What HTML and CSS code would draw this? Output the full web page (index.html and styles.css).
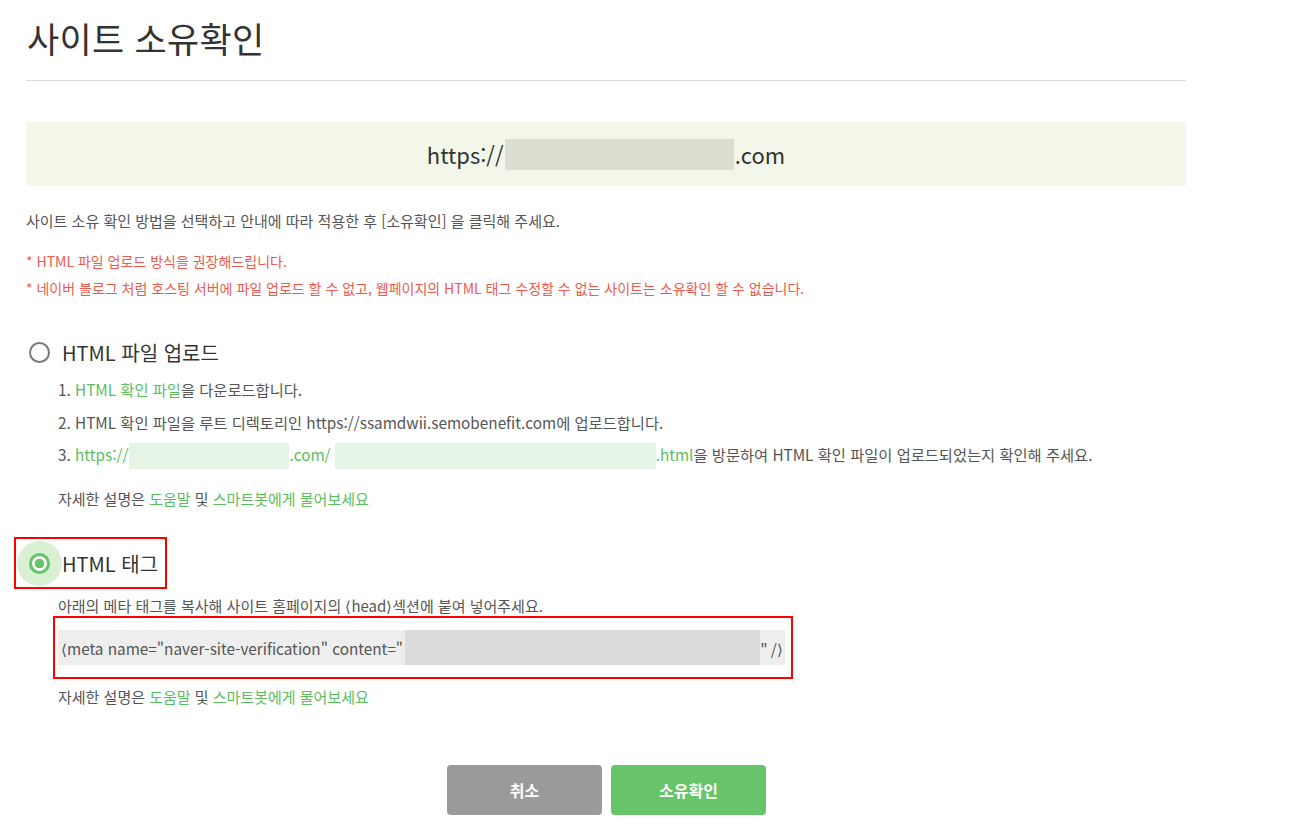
FILE: index.html
```html
<!DOCTYPE html>
<html lang="ko">
<head>
<meta charset="utf-8">
<title>사이트 소유확인</title>
<link rel="stylesheet" href="styles.css">
</head>
<body>
<div class="page">
  <h1 class="title">사이트 소유확인</h1>
  <div class="site-box">
    <span>https://</span><span class="blur blur-site"></span><span>.com</span>
  </div>
  <p class="desc">사이트 소유 확인 방법을 선택하고 안내에 따라 적용한 후 [소유확인] 을 클릭해 주세요.</p>
  <p class="warn">* HTML 파일 업로드 방식을 권장해드립니다.</p>
  <p class="warn warn2">* 네이버 블로그 처럼 호스팅 서버에 파일 업로드 할 수 없고, 웹페이지의 HTML 태그 수정할 수 없는 사이트는 소유확인 할 수 없습니다.</p>

  <div class="option">
    <div class="opt-head">
      <span class="radio"></span>
      <span class="opt-label">HTML 파일 업로드</span>
    </div>
    <ol class="steps">
      <li>1. <a class="g">HTML 확인 파일</a>을 다운로드합니다.</li>
      <li>2. HTML 확인 파일을 루트 디렉토리인 https://ssamdwii.semobenefit.com에 업로드합니다.</li>
      <li>3. <a class="g">https://<span class="blur blur-a"></span>.com/<span class="blur blur-b"></span>.html</a>을 방문하여 HTML 확인 파일이 업로드되었는지 확인해 주세요.</li>
    </ol>
    <p class="help">자세한 설명은 <a class="g">도움말</a> 및 <a class="g">스마트봇에게 물어보세요</a></p>
  </div>

  <div class="option option-tag">
    <div class="opt-head selected-box">
      <span class="radio-on"><span class="ring"></span></span>
      <span class="opt-label">HTML 태그</span>
    </div>
    <p class="tag-desc">아래의 메타 태그를 복사해 사이트 홈페이지의 &lang;head&rang;섹션에 붙여 넣어주세요.</p>
    <div class="code-frame">
      <div class="code">&lang;meta name="naver-site-verification" content="<span class="blur blur-code"></span>" /&rang;</div>
    </div>
    <p class="help help2">자세한 설명은 <a class="g">도움말</a> 및 <a class="g">스마트봇에게 물어보세요</a></p>
  </div>

  <div class="buttons">
    <button class="btn btn-cancel">취소</button>
    <button class="btn btn-ok">소유확인</button>
  </div>
</div>
</body>
</html>
```

FILE: styles.css
```css
* { box-sizing: border-box; }
html, body { margin: 0; padding: 0; background: #fff; }
body {
  font-family: "Noto Sans CJK KR", "Noto Sans", sans-serif;
  color: #555;
}
.page {
  width: 1186px;
  padding-left: 26px;
}
.title {
  margin: 0;
  padding: 11px 0 15px 1px;
  font-size: 35px;
  line-height: 54px;
  font-weight: 400;
  color: #333;
  border-bottom: 1px solid #dcdcdc;
  letter-spacing: 0.3px;
}
.site-box {
  margin-top: 41px;
  height: 64px;
  background: #f2f7ea;
  display: flex;
  align-items: center;
  justify-content: center;
  font-size: 22px;
  color: #333;
}
.blur { display: inline-block; vertical-align: middle; }
.blur-site { width: 229px; height: 31px; background: #dbdfd2; margin: 0 1px; }
.desc {
  margin: 20px 0 0 0;
  font-size: 15px;
  line-height: 30px;
  color: #555;
}
.warn {
  margin: 15px 0 0 0;
  font-size: 14px;
  line-height: 20px;
  color: #ef5a4e;
}
.warn2 { margin-top: 7px; }
.option { margin-top: 34px; }
.opt-head {
  display: flex;
  align-items: center;
  height: 40px;
}
.radio {
  width: 21px;
  height: 21px;
  border: 2px solid #777;
  border-radius: 50%;
  margin-left: 3px;
  margin-right: 12px;
  background: #fff;
}
.opt-label {
  font-size: 20px;
  color: #333;
}
.steps {
  list-style: none;
  margin: 6px 0 0 32px;
  padding: 0;
  font-size: 15.3px;
  color: #555;
}
.steps li { line-height: 22px; height: 22px; margin-bottom: 10.5px; white-space: nowrap; }
.g { color: #5bbd5e; text-decoration: none; }
.blur-a { width: 160px; height: 26px; background: #e6f4e6; vertical-align: -8px; margin-left: 1px; }
.blur-b { width: 321px; height: 26px; background: #e6f4e6; vertical-align: -8px; margin-left: 4px; }
.help {
  margin: 23px 0 0 32px;
  font-size: 15px;
  line-height: 22px;
  color: #555;
}
.option-tag { margin-top: 27px; }
.selected-box {
  width: 153px;
  height: 52px;
  margin-left: -12px;
  border: 2px solid #f00;
  padding-left: 1px;
}
.radio-on {
  width: 45px;
  height: 45px;
  border-radius: 50%;
  background: #d9f0d3;
  display: flex;
  align-items: center;
  justify-content: center;
  margin-right: 0;
}
.ring {
  width: 21px;
  height: 21px;
  border-radius: 50%;
  border: 3px solid #65c368;
  background: radial-gradient(circle, #65c368 0 4.5px, #fff 5px);
}
.tag-desc {
  margin: 6px 0 0 32px;
  font-size: 15px;
  line-height: 22px;
  color: #555;
}
.code-frame {
  margin: -1px 0 0 27px;
  width: 740px;
  height: 63px;
  border: 2px solid #f00;
  padding: 12px 6px 0 3px;
}
.code {
  background: #eeeeee;
  height: 35px;
  display: flex;
  align-items: center;
  padding-left: 3px;
  font-size: 15.3px;
  color: #555;
  white-space: pre;
}
.blur-code { width: 355px; height: 35px; background: #dcdcdc; margin-left: 2px; }
.help2 { margin-top: 7px; }
.buttons {
  margin-top: 57px;
  display: flex;
  justify-content: flex-start;
  gap: 9px;
  padding-left: 421px;
}
.btn {
  width: 155px;
  height: 50px;
  border: 0;
  border-radius: 4px;
  color: #fff;
  font-family: "Noto Sans CJK KR", sans-serif;
  font-size: 16px;
  font-weight: 700;
  cursor: pointer;
}
.btn-cancel { background: #9a9a9a; }
.btn-ok { background: #68c46a; }
```
